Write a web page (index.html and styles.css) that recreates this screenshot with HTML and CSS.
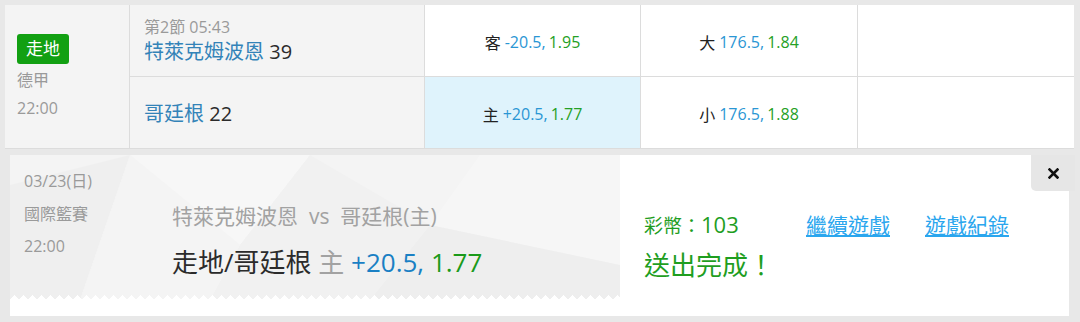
FILE: index.html
```html
<!DOCTYPE html>
<html lang="zh-Hant">
<head>
    <meta charset="UTF-8">
    <meta name="viewport" content="width=device-width, initial-scale=1.0">
    <title>走地投注</title>
    <link rel="stylesheet" href="styles.css">
</head>
<body>
    <div class="wrap">
        <div class="board">
            <div class="cell league">
                <span class="badge">走地</span>
                <span class="league-name">德甲</span>
                <span class="league-time">22:00</span>
            </div>
            <div class="cell team team-away">
                <span class="period">第2節 05:43</span>
                <span class="team-name">特萊克姆波恩 <b>39</b></span>
            </div>
            <div class="cell odds">客 <span class="line">-20.5,</span> <span class="price">1.95</span></div>
            <div class="cell odds">大 <span class="line">176.5,</span> <span class="price">1.84</span></div>
            <div class="cell odds empty"></div>

            <div class="cell team">
                <span class="team-name">哥廷根 <b>22</b></span>
            </div>
            <div class="cell odds picked">主 <span class="line">+20.5,</span> <span class="price">1.77</span></div>
            <div class="cell odds">小 <span class="line">176.5,</span> <span class="price">1.88</span></div>
            <div class="cell odds empty"></div>
        </div>

        <div class="result">
            <div class="ticket">
                <svg class="ticket-bg" width="610" height="145" viewBox="0 0 610 145">
                    <polygon points="0,30 120,0 70,145 0,145" fill="#efefef"/>
                    <polygon points="120,0 300,0 230,90" fill="#f7f7f7"/>
                    <polygon points="230,90 300,0 420,70 360,145 200,145" fill="#f1f1f1"/>
                    <polygon points="420,70 470,0 610,0 610,110" fill="#f6f6f6"/>
                    <polygon points="360,145 420,70 610,110 610,145" fill="#eeeeee"/>
                    <polygon points="70,145 120,0 230,90 200,145" fill="#f4f4f4"/>
                </svg>
                <div class="meta">
                    <span>03/23(日)</span>
                    <span class="meta-league">國際籃賽</span>
                    <span>22:00</span>
                </div>
                <div class="bet">
                    <div class="match">特萊克姆波恩 &nbsp;vs&nbsp; 哥廷根(主)</div>
                    <div class="pick">走地/哥廷根 <span class="side">主</span> <span class="line">+20.5,</span> <span class="price">1.77</span></div>
                </div>
            </div>
            <div class="status">
                <div class="status-top">
                    <span class="coins"><small>彩幣：</small>103</span>
                    <a href="#" class="link">繼續遊戲</a>
                    <a href="#" class="link">遊戲紀錄</a>
                </div>
                <div class="done">送出完成！</div>
            </div>
            <button class="close" type="button" aria-label="關閉">
                <svg width="11" height="11" viewBox="0 0 11 11">
                    <path d="M1.5 1.5 L9.5 9.5 M9.5 1.5 L1.5 9.5" stroke="#111" stroke-width="2.6" stroke-linecap="square"/>
                </svg>
            </button>
        </div>
    </div>
</body>
</html>
```

FILE: styles.css
```css
body {
    margin: 0;
    background: #e8e8e8;
    font-family: "Open Sans", "Noto Sans CJK TC", sans-serif;
    color: #333;
}

.wrap {
    padding: 5px 6px 6px 5px;
}

.board {
    display: grid;
    grid-template-columns: 125px 295px 216px 217px 216px;
    grid-template-rows: 72px 72px;
    background: #fff;
}

.cell {
    border-right: 1px solid #dcdcdc;
    border-bottom: 1px solid #dcdcdc;
    box-sizing: border-box;
}

.cell:last-child,
.cell.empty {
    border-right: none;
}

.league {
    grid-row: span 2;
    background: #f4f4f4;
    display: flex;
    flex-direction: column;
    justify-content: center;
    align-items: flex-start;
    padding-left: 12px;
    padding-top: 2px;
    color: #9a9a9a;
    font-size: 16px;
}

.badge {
    background: #12a012;
    color: #fff;
    font-size: 17px;
    line-height: 30px;
    padding: 0 9px;
    border-radius: 3px;
    margin-bottom: 2px;
}

.league-name,
.league-time {
    line-height: 28px;
}

.team {
    background: #f4f4f4;
    display: flex;
    flex-direction: column;
    justify-content: center;
    padding-left: 14px;
    padding-top: 2px;
}

.team-away {
    padding-top: 0;
    padding-bottom: 0;
}

.period {
    color: #9a9a9a;
    font-size: 16px;
    line-height: 22px;
}

.team-name {
    color: #3383b8;
    font-size: 20px;
    line-height: 28px;
}

.team-name b {
    color: #2b2b2b;
    font-weight: 400;
}

.odds {
    display: flex;
    justify-content: center;
    align-items: center;
    gap: 4px;
    padding-top: 3px;
    font-size: 16px;
    color: #222;
}

.odds .line {
    color: #2a96d4;
    margin-right: -1px;
}

.odds .price {
    color: #25a025;
}

.picked {
    background: #dff3fc;
}

.result {
    position: relative;
    display: flex;
    margin: 6px 5px 0 5px;
    height: 161px;
    background: #fff;
}

.ticket {
    position: relative;
    display: flex;
    width: 610px;
    height: 145px;
    background: #f4f4f4;
    overflow: hidden;
}

.ticket-bg {
    position: absolute;
    left: 0;
    top: 0;
}

.ticket::after {
    content: "";
    position: absolute;
    left: 0;
    right: 0;
    bottom: 0;
    height: 5px;
    background: conic-gradient(from 135deg at 50% 0, #fff 90deg, transparent 0);
    background-size: 9px 5px;
}

.meta {
    position: relative;
    display: flex;
    flex-direction: column;
    width: 162px;
    padding: 10px 0 0 14px;
    box-sizing: border-box;
    color: #9a9a9a;
    font-size: 16px;
    line-height: 32.5px;
}

.bet {
    position: relative;
    padding-top: 46px;
}

.match {
    color: #a2a2a2;
    font-size: 21px;
    line-height: 30px;
}

.pick {
    margin-top: 11px;
    font-size: 26px;
    line-height: 40px;
    color: #2b2b2b;
}

.pick .side {
    color: #a2a2a2;
}

.pick .line {
    color: #1a80c4;
}

.pick .price {
    color: #1a9a1a;
}

.status {
    padding: 52px 0 0 24px;
    color: #1f9e1f;
}

.status-top {
    display: flex;
    align-items: baseline;
    line-height: 34px;
}

.coins {
    width: 162px;
    font-size: 22px;
}

.coins small {
    font-size: 19px;
}

.link {
    color: #2aa6ee;
    font-size: 21px;
    margin-right: 35px;
}

.done {
    font-size: 26px;
    line-height: 40px;
    margin-top: 2px;
}

.close {
    position: absolute;
    top: 0;
    right: -6px;
    width: 44px;
    height: 36px;
    padding: 0;
    border: none;
    border-bottom-left-radius: 5px;
    background: #e6e6e6;
    display: flex;
    justify-content: center;
    align-items: center;
    cursor: pointer;
}
```
